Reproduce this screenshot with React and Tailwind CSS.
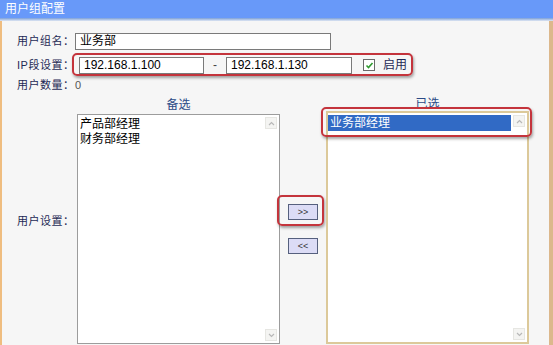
import React from "react";

const font = { fontFamily: '"Liberation Sans", "Noto Sans CJK SC", sans-serif' };

function ScrollArrow({ down }) {
  return (
    <div className="w-[12px] h-[12px] bg-[#f4f4f2] border border-[#e6e6e2] flex items-center justify-center">
      <svg width="7" height="5" viewBox="0 0 7 5">
        <path
          d={down ? "M1 1 L3.5 3.5 L6 1" : "M1 4 L3.5 1.5 L6 4"}
          fill="none"
          stroke="#b8b8b8"
          strokeWidth="1.2"
        />
      </svg>
    </div>
  );
}

function ListBox({ items, selected, className }) {
  return (
    <div className={`relative w-[203px] bg-white ${className}`}>
      <div className="flex flex-col pt-[2px] pr-[16px] text-[12px] text-black">
        {items.map((it) => (
          <div
            key={it}
            className={`pl-[2px] h-[15px] leading-[15px] ${it === selected ? "bg-[#316ac5] text-white h-[16px] leading-[16px]" : ""}`}
          >
            {it}
          </div>
        ))}
      </div>
      <div className="absolute top-[2px] right-[2px]">
        <ScrollArrow />
      </div>
      <div className="absolute bottom-[2px] right-[2px]">
        <ScrollArrow down />
      </div>
    </div>
  );
}

const redBox = "absolute border-2 border-[#c4343c] rounded-[5px] shadow-[1px_2px_3px_rgba(0,0,0,0.35)]";

export default function App() {
  return (
    <div className="w-[553px] h-[345px] overflow-hidden bg-[#f6f6f6] flex flex-col" style={font}>
      <div className="h-[18px] bg-[#6899f9] text-white text-[12px] leading-[18px] pl-[5px]">
        用户组配置
      </div>
      <div className="h-[3px] bg-gradient-to-b from-[#7b9fd8] to-[#dfe6f2]" />
      <div className="flex-1 flex flex-col border-l-[2px] border-[#efbd80] border-r-[4px] border-r-[#dcb88c] pl-[15px] text-[12px] text-[#1e2a55] whitespace-nowrap">
        <div className="flex items-center mt-[12px] h-[17px]">
          <div className="w-[58px] shrink-0 text-[11px] tracking-[0.5px]">用户组名：</div>
          <div className="w-[256px] h-[17px] bg-white border border-[#7a7a7a] text-black pl-[4px] leading-[15px]">
            业务部
          </div>
        </div>

        <div className="relative flex items-center mt-[6px] h-[18px]">
          <div className="w-[62px] shrink-0 text-[11px] tracking-[0.5px]">IP段设置：</div>
          <div className="w-[125px] h-[17px] bg-white border border-[#7a7a7a] text-black pl-[4px] leading-[15px]">
            192.168.1.100
          </div>
          <div className="w-[22px] text-center text-[#444]">-</div>
          <div className="w-[126px] h-[17px] bg-white border border-[#7a7a7a] text-black pl-[4px] leading-[15px]">
            192.168.1.130
          </div>
          <div className="ml-[11px] w-[12px] h-[12px] border border-[#6a6a6a] bg-white flex items-center justify-center">
            <svg width="9" height="9" viewBox="0 0 9 9">
              <path d="M1.5 4.5 L3.5 6.5 L7.5 2" fill="none" stroke="#2f9a2f" strokeWidth="1.6" />
            </svg>
          </div>
          <div className="ml-[8px]">启用</div>
          <div className={`${redBox} left-[55px] top-[-3px] w-[341px] h-[23px]`} />
        </div>

        <div className="flex items-center mt-[3px] h-[16px]">
          <div className="w-[58px] shrink-0 text-[11px] tracking-[0.5px]">用户数量：</div>
          <div className="text-[#555] text-[11px]">0</div>
        </div>

        <div className="flex mt-[5px]">
          <div className="w-[60px] shrink-0 flex items-center text-[11px] tracking-[0.5px]">用户设置：</div>
          <div className="flex flex-col items-center">
            <div className="h-[16px] leading-[14px] text-[#2b4a86]">备选</div>
            <ListBox
              items={["产品部经理", "财务部经理"]}
              className="h-[230px] border border-[#9c9c9c]"
            />
          </div>
          <div className="w-[46px] shrink-0 flex flex-col items-center pt-[106px] relative">
            <button className="w-[30px] h-[16px] bg-[#dcdcf6] border border-[#56607e] text-[9px] leading-[12px] text-[#333]">
              &gt;&gt;
            </button>
            <button className="mt-[18px] w-[30px] h-[16px] bg-[#dcdcf6] border border-[#56607e] text-[9px] leading-[12px] text-[#333]">
              &lt;&lt;
            </button>
            <div className={`${redBox} left-[-3px] top-[97px] w-[47px] h-[31px]`} />
          </div>
          <div className="relative flex flex-col items-center">
            <div className="h-[13px] leading-[12px] text-[#2b4a86]">已选</div>
            <ListBox
              items={["业务部经理"]}
              selected="业务部经理"
              className="h-[233px] border-2 border-[#dcc99a]"
            />
            <div className={`${redBox} left-[-5px] top-[9px] w-[211px] h-[30px]`} />
          </div>
        </div>
      </div>
    </div>
  );
}
